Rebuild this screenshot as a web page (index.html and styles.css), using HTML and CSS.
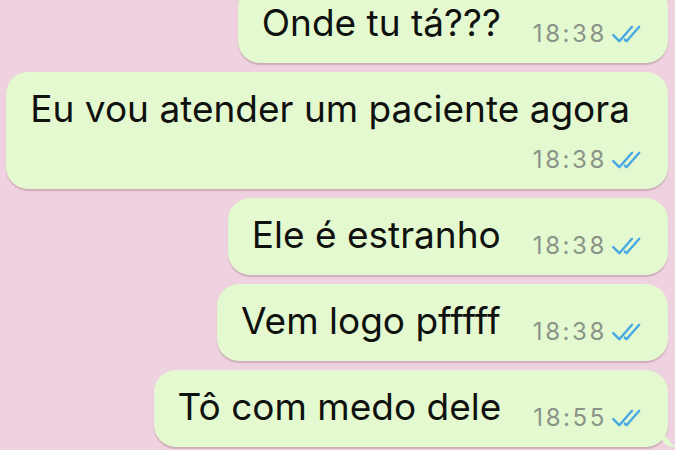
FILE: index.html
```html
<!DOCTYPE html>
<html lang="pt">
<head>
<meta charset="utf-8">
<title>Chat</title>
<link rel="stylesheet" href="styles.css">
</head>
<body>
<div class="chat">
  <div class="bubble">
    <span class="text">Onde tu tá???</span>
    <span class="meta"><span class="time">18:38</span><svg class="ticks" viewBox="0 0 28 18"><path d="M2 10 L7.5 15.5 L19 2.5 M12.5 14 L14 15.5 L25.5 2.5"/></svg></span>
  </div>
  <div class="bubble wide">
    <span class="text">Eu vou atender um paciente agora</span>
    <span class="meta"><span class="time">18:38</span><svg class="ticks" viewBox="0 0 28 18"><path d="M2 10 L7.5 15.5 L19 2.5 M12.5 14 L14 15.5 L25.5 2.5"/></svg></span>
  </div>
  <div class="bubble">
    <span class="text">Ele é estranho</span>
    <span class="meta"><span class="time">18:38</span><svg class="ticks" viewBox="0 0 28 18"><path d="M2 10 L7.5 15.5 L19 2.5 M12.5 14 L14 15.5 L25.5 2.5"/></svg></span>
  </div>
  <div class="bubble">
    <span class="text">Vem logo pfffff</span>
    <span class="meta"><span class="time">18:38</span><svg class="ticks" viewBox="0 0 28 18"><path d="M2 10 L7.5 15.5 L19 2.5 M12.5 14 L14 15.5 L25.5 2.5"/></svg></span>
  </div>
  <div class="bubble last">
    <span class="text">Tô com medo dele</span>
    <span class="meta"><span class="time">18:55</span><svg class="ticks" viewBox="0 0 28 18"><path d="M2 10 L7.5 15.5 L19 2.5 M12.5 14 L14 15.5 L25.5 2.5"/></svg></span>
  </div>
</div>
</body>
</html>
```
FILE: styles.css
```css
html, body {
  margin: 0;
  padding: 0;
  background: #efd2df;
  width: 675px;
  height: 450px;
  overflow: hidden;
}
.chat {
  display: flex;
  flex-direction: column;
  align-items: flex-end;
  gap: 9px;
  margin-top: -14px;
  padding-right: 7px;
  font-family: Inter, "Liberation Sans", sans-serif;
}
.bubble {
  position: relative;
  display: flex;
  align-items: flex-end;
  background: #e4f9d0;
  border-radius: 22px;
  padding: 16px 26px 19px 24px;
  box-shadow: 0 1.5px 1px rgba(150, 110, 120, 0.35);
}
.bubble.wide {
  flex-direction: column;
  align-items: stretch;
  padding-right: 38px;
}
.text {
  font-size: 37px;
  line-height: 42px;
  color: #0f110f;
  white-space: nowrap;
}
.meta {
  display: flex;
  align-items: center;
  gap: 4px;
  margin-left: 32px;
  height: 20px;
  line-height: 20px;
}
.wide .meta {
  align-self: flex-end;
  margin-top: 20px;
  margin-right: -12px;
}
.time {
  font-size: 24px;
  color: #8a9488;
  letter-spacing: 2.6px;
}
.ticks {
  width: 31px;
  height: 20px;
  fill: none;
  stroke: #48a8e3;
  stroke-width: 2.2;
  stroke-linecap: round;
  stroke-linejoin: round;
}
.last::after {
  content: "";
  position: absolute;
  right: -7px;
  bottom: 0;
  width: 16px;
  height: 18px;
  background: #e4f9d0;
  border-bottom-left-radius: 14px 18px;
  clip-path: polygon(0 0, 100% 100%, 0 100%);
}
```
